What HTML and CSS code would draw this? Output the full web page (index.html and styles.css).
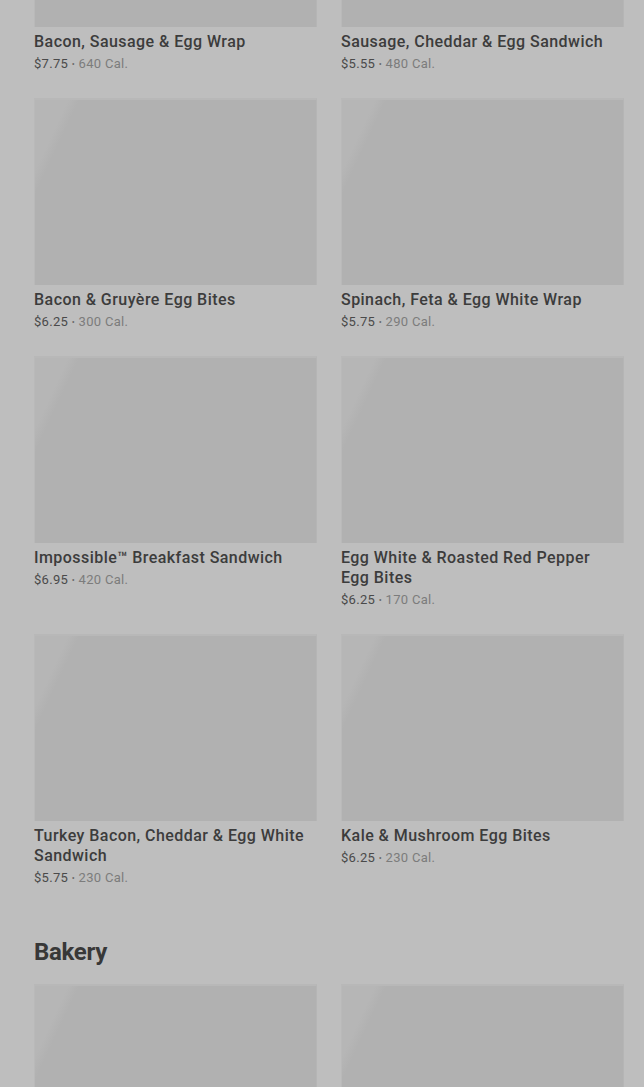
FILE: index.html
```html
<!DOCTYPE html>
<html lang="en">
<head>
<meta charset="utf-8">
<title>Menu</title>
<link rel="stylesheet" href="styles.css">
</head>
<body>
<main class="page">
  <section class="category">
    <div class="grid">
      <article class="item"><div class="thumb"></div><h3 class="name">Bacon, Sausage &amp; Egg Wrap</h3><p class="meta"><span class="price">$7.75</span> <span class="dot">•</span> <span class="cal">640 Cal.</span></p></article>
      <article class="item"><div class="thumb"></div><h3 class="name">Sausage, Cheddar &amp; Egg Sandwich</h3><p class="meta"><span class="price">$5.55</span> <span class="dot">•</span> <span class="cal">480 Cal.</span></p></article>
      <article class="item"><div class="thumb"></div><h3 class="name">Bacon &amp; Gruyère Egg Bites</h3><p class="meta"><span class="price">$6.25</span> <span class="dot">•</span> <span class="cal">300 Cal.</span></p></article>
      <article class="item"><div class="thumb"></div><h3 class="name">Spinach, Feta &amp; Egg White Wrap</h3><p class="meta"><span class="price">$5.75</span> <span class="dot">•</span> <span class="cal">290 Cal.</span></p></article>
      <article class="item"><div class="thumb"></div><h3 class="name">Impossible™ Breakfast Sandwich</h3><p class="meta"><span class="price">$6.95</span> <span class="dot">•</span> <span class="cal">420 Cal.</span></p></article>
      <article class="item"><div class="thumb"></div><h3 class="name">Egg White &amp; Roasted Red Pepper Egg Bites</h3><p class="meta"><span class="price">$6.25</span> <span class="dot">•</span> <span class="cal">170 Cal.</span></p></article>
      <article class="item"><div class="thumb"></div><h3 class="name">Turkey Bacon, Cheddar &amp; Egg White Sandwich</h3><p class="meta"><span class="price">$5.75</span> <span class="dot">•</span> <span class="cal">230 Cal.</span></p></article>
      <article class="item"><div class="thumb"></div><h3 class="name">Kale &amp; Mushroom Egg Bites</h3><p class="meta"><span class="price">$6.25</span> <span class="dot">•</span> <span class="cal">230 Cal.</span></p></article>
    </div>
  </section>
  <section class="category">
    <h2 class="cat-title">Bakery</h2>
    <div class="grid">
      <article class="item"><div class="thumb"></div></article>
      <article class="item"><div class="thumb"></div></article>
    </div>
  </section>
</main>
</body>
</html>
```

FILE: styles.css
```css
html, body {
  margin: 0;
  padding: 0;
  background: #bebebe;
  overflow: hidden;
}
body {
  font-family: Roboto, "Liberation Sans", sans-serif;
  color: #3b3b3b;
}
.page {
  padding: 0 20px 0 34px;
  margin-top: -160px;
}
.grid {
  display: grid;
  grid-template-columns: 283px 283px;
  column-gap: 24px;
  row-gap: 25px;
  align-items: start;
}
.item {
  margin: 0;
}
.thumb {
  height: 187px;
  box-sizing: border-box;
  background:
    linear-gradient(115deg, #b6b6b6 0, #b6b6b6 9%, rgba(177,177,177,0) 12%),
    #b1b1b1;
  border-top: 2px solid #b8b8b8;
  border-left: 1px solid #b9b9b9;
  border-right: 1px solid #b5b5b5;
}
.name {
  margin: 5px 0 0;
  padding-right: 8px;
  font-size: 16px;
  line-height: 20px;
  font-weight: 500;
  color: #3c3c3c;
  letter-spacing: 0.45px;
}
.meta {
  margin: 3px 0 0;
  font-size: 13px;
  line-height: 18px;
  color: #4a4a4a;
  letter-spacing: 0.3px;
}
.dot {
  font-size: 9px;
  color: #6a6a6a;
  vertical-align: 1px;
}
.cal {
  color: #7c7c7c;
}
.category + .category {
  margin-top: 53px;
}
.cat-title {
  margin: 0 0 20px;
  font-size: 24px;
  line-height: 24px;
  font-weight: 700;
  color: #383838;
  letter-spacing: -0.3px;
}
```
